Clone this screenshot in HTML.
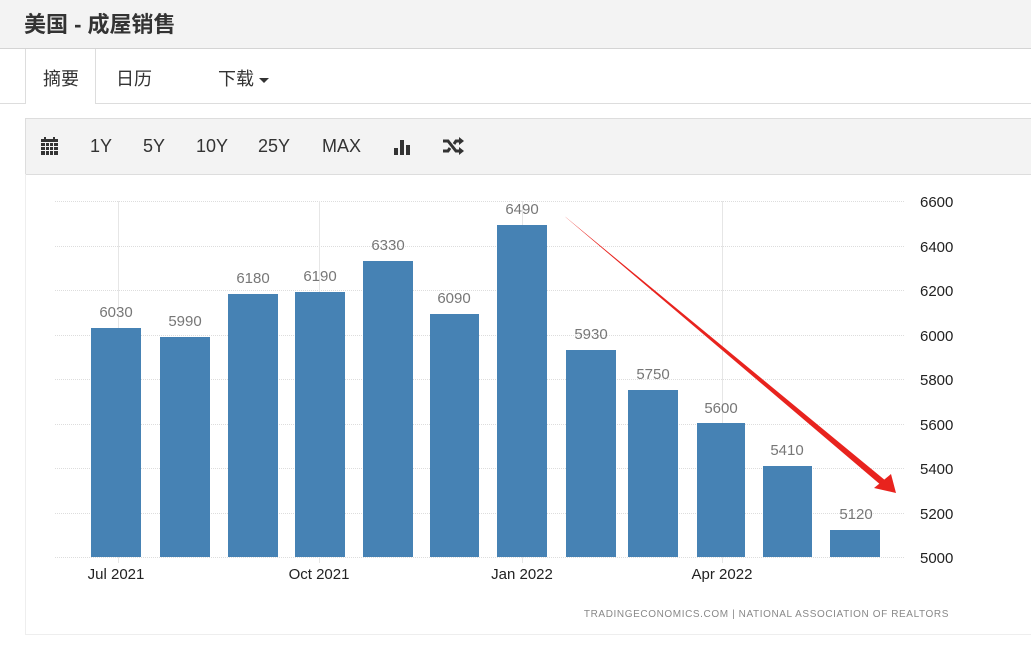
<!DOCTYPE html>
<html><head><meta charset="utf-8"><style>
body{margin:0;width:1031px;height:662px;background:#fff;overflow:hidden;font-family:"Liberation Sans","Noto Sans CJK SC",sans-serif;position:relative}
.hdr{position:absolute;left:0;top:0;width:1031px;height:48px;background:#f3f3f3;border-bottom:1px solid #d4d4d4}
.hdr span{position:absolute;left:24px;top:7px;font-size:22px;font-weight:bold;color:#333}
.tabline{position:absolute;left:0;top:103px;width:1031px;height:1px;background:#ddd}
.tab{position:absolute;left:25px;top:49px;width:69px;height:55px;background:#fff;border-left:1px solid #ddd;border-right:1px solid #ddd}
.t{position:absolute;top:65px;font-size:18px;color:#333}
.tb{position:absolute;left:25px;top:118px;width:1006px;height:55px;background:#f3f3f3;border-top:1px solid #ddd;border-bottom:1px solid #ddd;border-left:1px solid #ddd}
.tb span{position:absolute;top:17px;font-size:18px;color:#333}
.panel{position:absolute;left:25px;top:174px;width:1006px;height:460px;border-left:1px solid #eee;border-bottom:1px solid #eee}
svg{position:absolute;left:0;top:0}
</style></head><body>
<div class="hdr"><span>美国 - 成屋销售</span></div>
<div class="tabline"></div>
<div class="tab"></div>
<div class="t" style="left:43px">摘要</div>
<div class="t" style="left:116px">日历</div>
<div class="t" style="left:218px">下载 <span style="display:inline-block;width:0;height:0;border-left:5px solid transparent;border-right:5px solid transparent;border-top:5px solid #333;vertical-align:middle"></span></div>
<div class="tb">
<svg width="20" height="20" style="left:14px;top:17px" viewBox="0 0 20 20"><rect x="1" y="3" width="17" height="16" fill="#333"/><rect x="4" y="1" width="2" height="4" fill="#333"/><rect x="13" y="1" width="2" height="4" fill="#333"/><g fill="#f3f3f3"><rect x="1" y="6" width="17" height="1"/><rect x="1" y="10" width="17" height="1"/><rect x="1" y="14" width="17" height="1"/><rect x="5" y="6" width="1" height="13"/><rect x="9" y="6" width="1" height="13"/><rect x="13" y="6" width="1" height="13"/></g></svg>
<span style="left:64px">1Y</span><span style="left:117px">5Y</span><span style="left:170px">10Y</span><span style="left:232px">25Y</span><span style="left:296px">MAX</span>
<svg width="20" height="20" style="left:367px;top:18px" viewBox="0 0 20 20"><rect x="1" y="11" width="4" height="7" fill="#333"/><rect x="7" y="3" width="4" height="15" fill="#333"/><rect x="13" y="8" width="4" height="10" fill="#333"/></svg>
<svg width="24" height="20" style="left:416px;top:17px" viewBox="0 0 24 20"><path d="M1 5h5l8 10h4M1 15h5l2-3M12 8l2-3h4" stroke="#333" stroke-width="3" fill="none"/><path d="M17 1l5 4-5 4zM17 11l5 4-5 4z" fill="#333"/></svg>
</div>
<div class="panel"></div>
<svg width="1031" height="662" style="font-family:'Liberation Sans',sans-serif">
<g stroke="#ddd" stroke-dasharray="1,1" stroke-width="1">
<line x1="55" y1="201.5" x2="905" y2="201.5"/><line x1="55" y1="246.5" x2="905" y2="246.5"/><line x1="55" y1="290.5" x2="905" y2="290.5"/><line x1="55" y1="335.5" x2="905" y2="335.5"/><line x1="55" y1="379.5" x2="905" y2="379.5"/><line x1="55" y1="424.5" x2="905" y2="424.5"/><line x1="55" y1="468.5" x2="905" y2="468.5"/><line x1="55" y1="513.5" x2="905" y2="513.5"/><line x1="55" y1="557.5" x2="905" y2="557.5"/>
</g>
<g stroke="#e6e6e6" stroke-width="1"><line x1="118.5" y1="201" x2="118.5" y2="563"/><line x1="319.5" y1="201" x2="319.5" y2="563"/><line x1="522.5" y1="201" x2="522.5" y2="563"/><line x1="722.5" y1="201" x2="722.5" y2="563"/></g>
<g fill="#4682b4">
<rect x="91" y="328" width="50" height="229"/><rect x="160" y="337" width="50" height="220"/><rect x="228" y="294" width="50" height="263"/><rect x="295" y="292" width="50" height="265"/><rect x="363" y="261" width="50" height="296"/><rect x="430" y="314" width="49" height="243"/><rect x="497" y="225" width="50" height="332"/><rect x="566" y="350" width="50" height="207"/><rect x="628" y="390" width="50" height="167"/><rect x="697" y="423" width="48" height="134"/><rect x="763" y="466" width="49" height="91"/><rect x="830" y="530" width="50" height="27"/>
</g>
<g fill="#777" font-size="15" text-anchor="middle">
<text x="116" y="317">6030</text><text x="185" y="326">5990</text><text x="253" y="283">6180</text><text x="320" y="281">6190</text><text x="388" y="250">6330</text><text x="454" y="303">6090</text><text x="522" y="214">6490</text><text x="591" y="339">5930</text><text x="653" y="379">5750</text><text x="721" y="413">5600</text><text x="787" y="455">5410</text><text x="856" y="519">5120</text>
</g>
<g fill="#222" font-size="15" text-anchor="middle"><text x="116" y="579">Jul 2021</text><text x="319" y="579">Oct 2021</text><text x="522" y="579">Jan 2022</text><text x="722" y="579">Apr 2022</text></g>
<g fill="#222" font-size="15"><text x="920" y="207">6600</text><text x="920" y="252">6400</text><text x="920" y="296">6200</text><text x="920" y="341">6000</text><text x="920" y="385">5800</text><text x="920" y="430">5600</text><text x="920" y="474">5400</text><text x="920" y="519">5200</text><text x="920" y="563">5000</text></g>
<text x="949" y="617" fill="#888" font-size="10" text-anchor="end" letter-spacing="0.6">TRADINGECONOMICS.COM  |  NATIONAL ASSOCIATION OF REALTORS</text>
<path d="M565 216.5 L566 217.5 L882 486 L886 481Z" fill="#e8231e"/>
<path d="M896 493 L874 488 L891 474Z" fill="#e8231e"/>
</svg>
</body></html>
